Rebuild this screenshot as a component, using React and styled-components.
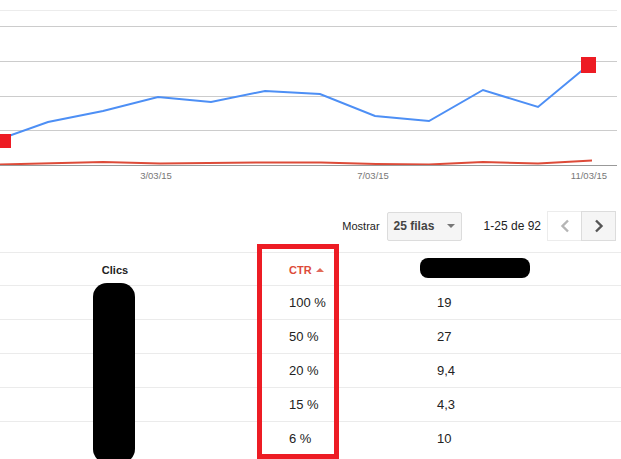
import React from "react";
import styled, { createGlobalStyle } from "styled-components";

const GlobalStyle = createGlobalStyle`
  html, body {
    margin: 0;
    padding: 0;
    background: #fff;
    font-family: "Liberation Sans", Arial, sans-serif;
  }
`;

const Page = styled.div`
  width: 621px;
  height: 459px;
  overflow: hidden;
  position: relative;
`;

const ChartBox = styled.div`
  height: 190px;
`;

const Toolbar = styled.div`
  display: flex;
  justify-content: flex-end;
  align-items: center;
  height: 30px;
  margin-top: 21px;
  padding-right: 5px;
`;

const Label = styled.span`
  font-size: 11px;
  color: #222;
  margin-right: ${(p) => p.gap || 0}px;
`;

const Select = styled.div`
  display: flex;
  align-items: center;
  justify-content: space-between;
  box-sizing: border-box;
  width: 75px;
  height: 29px;
  padding: 0 6px;
  background: #f5f5f5;
  border: 1px solid #dcdcdc;
  border-radius: 2px;
  font-size: 12px;
  font-weight: bold;
  color: #444;
  margin-right: 22px;
`;

const Caret = styled.span`
  width: 0;
  height: 0;
  border-left: 4px solid transparent;
  border-right: 4px solid transparent;
  border-top: 4px solid #777;
`;

const Count = styled.span`
  font-size: 12px;
  color: #222;
  margin-right: 6px;
`;

const Pager = styled.div`
  display: flex;
`;

const PageButton = styled.div`
  display: flex;
  align-items: center;
  justify-content: center;
  box-sizing: border-box;
  width: 35px;
  height: 30px;
  background: ${(p) => (p.active ? "#f5f5f5" : "#fff")};
  border: 1px solid ${(p) => (p.active ? "#dcdcdc" : "#ececec")};
  margin-left: ${(p) => (p.active ? "-1px" : "0")};
`;

const TableArea = styled.div`
  position: relative;
  margin-top: 11px;
`;

const Row = styled.div`
  display: grid;
  grid-template-columns: 230px 148px 1fr;
  align-items: center;
  height: ${(p) => (p.header ? 33 : 34)}px;
  box-sizing: border-box;
  border-top: 1px solid #ebebeb;
  font-size: 13px;
  color: #222;
`;

const Cell = styled.div`
  text-align: ${(p) => (p.center ? "center" : "left")};
  padding-left: ${(p) => p.pad || 0}px;
`;

const HeadText = styled.span`
  font-size: 11px;
  font-weight: bold;
  color: ${(p) => (p.sorted ? "#dd4b39" : "#222")};
  display: inline-flex;
  align-items: center;
  gap: 4px;
`;

const SortArrow = styled.span`
  width: 0;
  height: 0;
  border-left: 4px solid transparent;
  border-right: 4px solid transparent;
  border-bottom: 4px solid #e26a5a;
`;

const HeadRedaction = styled.div`
  width: 110px;
  height: 20px;
  margin-left: 42px;
  margin-top: -2px;
  background: #000;
  border-radius: 8px;
`;

const ColumnRedaction = styled.div`
  position: absolute;
  left: 93px;
  top: 31px;
  width: 42px;
  height: 180px;
  background: #000;
  border-radius: 14px;
`;

const Highlight = styled.div`
  position: absolute;
  left: 257px;
  top: -8px;
  width: 82px;
  height: 215px;
  box-sizing: border-box;
  border: 5px solid #ed1c24;
`;

const blue = [
  [0, 139], [48, 122], [103, 111], [158, 97], [211, 102], [265, 91],
  [320, 94], [375, 116], [429, 121], [483, 90], [538, 107], [585, 68],
];
const red = [
  [0, 164.5], [103, 162], [160, 163.5], [266, 162.5], [321, 162.5],
  [376, 164], [429, 164.5], [483, 162], [538, 163.5], [592, 160.5],
];
const pts = (a) => a.map((p) => p.join(",")).join(" ");

const rows = [
  ["100 %", "19"],
  ["50 %", "27"],
  ["20 %", "9,4"],
  ["15 %", "4,3"],
  ["6 %", "10"],
];

const Chart = () => (
  <svg width="621" height="190" viewBox="0 0 621 190">
    <line x1="0" y1="10.5" x2="617" y2="10.5" stroke="#ececec" />
    {[26.5, 61.5, 96.5, 130.5].map((y) => (
      <line key={y} x1="0" y1={y} x2="617" y2={y} stroke="#cccccc" />
    ))}
    <polyline points={pts(red)} fill="none" stroke="#dd4b39" strokeWidth="2" />
    <line x1="0" y1="165.5" x2="617" y2="165.5" stroke="#999" />
    <polyline points={pts(blue)} fill="none" stroke="#4d8ff5" strokeWidth="2" />
    <rect x="-3" y="134" width="14" height="14" fill="#ed1c24" />
    <rect x="581" y="57" width="15" height="16" fill="#ed1c24" />
    <g fontFamily="Liberation Sans, Arial, sans-serif" fontSize="9.5" fill="#777" textAnchor="middle">
      <text x="156" y="179">3/03/15</text>
      <text x="373" y="179">7/03/15</text>
      <text x="589" y="179">11/03/15</text>
    </g>
  </svg>
);

const Chevron = ({ dir, color }) => (
  <svg width="10" height="14" viewBox="0 0 10 14">
    <polyline
      points={dir === "left" ? "8,1.5 2.5,7 8,12.5" : "2,1.5 7.5,7 2,12.5"}
      fill="none"
      stroke={color}
      strokeWidth="2.4"
    />
  </svg>
);

export default function App() {
  return (
    <Page>
      <GlobalStyle />
      <ChartBox>
        <Chart />
      </ChartBox>
      <Toolbar>
        <Label gap={7}>Mostrar</Label>
        <Select>
          25 filas
          <Caret />
        </Select>
        <Count>1-25 de 92</Count>
        <Pager>
          <PageButton>
            <Chevron dir="left" color="#b5b5b5" />
          </PageButton>
          <PageButton active>
            <Chevron dir="right" color="#555" />
          </PageButton>
        </Pager>
      </Toolbar>
      <TableArea>
        <Row header>
          <Cell center>
            <HeadText>Clics</HeadText>
          </Cell>
          <Cell pad={59}>
            <HeadText sorted>
              CTR
              <SortArrow />
            </HeadText>
          </Cell>
          <Cell>
            <HeadRedaction />
          </Cell>
        </Row>
        {rows.map(([ctr, pos]) => (
          <Row key={ctr}>
            <Cell center />
            <Cell pad={59}>{ctr}</Cell>
            <Cell pad={59}>{pos}</Cell>
          </Row>
        ))}
        <ColumnRedaction />
        <Highlight />
      </TableArea>
    </Page>
  );
}
